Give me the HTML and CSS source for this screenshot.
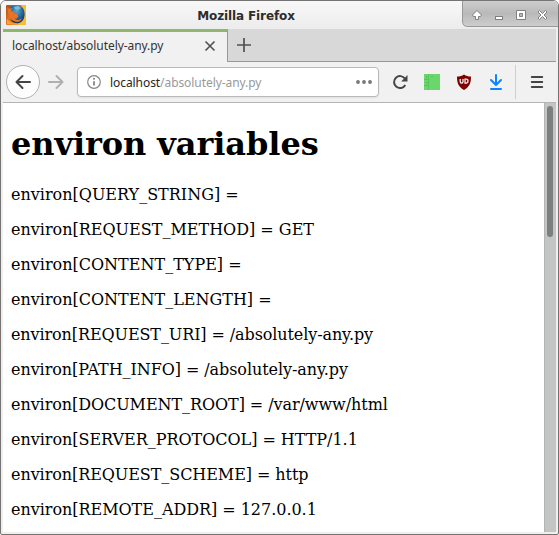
FILE: index.html
```html
<!DOCTYPE html>
<html lang="en">
<head>
<meta charset="utf-8">
<title>Mozilla Firefox</title>
<link rel="stylesheet" href="styles.css">
</head>
<body>
<div class="window">
  <header class="titlebar">
    <svg class="logo" width="20" height="20" viewBox="0 0 20 20">
      <defs>
        <linearGradient id="fox" x1="0" y1="0" x2="1" y2="1"><stop offset="0" stop-color="#ad4b20"/><stop offset=".5" stop-color="#e97820"/><stop offset="1" stop-color="#ffc52f"/></linearGradient>
        <radialGradient id="globe" cx=".45" cy=".3" r=".7"><stop offset="0" stop-color="#5ba9cf"/><stop offset=".6" stop-color="#23649b"/><stop offset="1" stop-color="#123265"/></radialGradient>
      </defs>
      <rect width="20" height="20" rx="1" fill="url(#fox)"/>
      <path d="M15 0h5v20h-8l5-6 1-6z" fill="#f9bd32"/>
      <path d="M4 2C7-.5 14 0 17 3c3 5 2 13-4 15-5 1-9-2-9-6l5 1 3-3-4-2-3-1z" fill="url(#globe)"/>
      <path d="M1 2l2 2 3-1-1 3 4 1-2 2 1 2 4 0c0 3-3 3-4 2 3 3 6 2 8 0-1 4-5 5-8 3-4-1-6-5-6-9z" fill="#e87322"/>
      <path d="M8 2l4-1 3 2-3 2-3-1z" fill="#7cbbd1"/>
      <path d="M1 14l4 4 7 1H1z" fill="#f5a23a"/>
    </svg>
    <h2 class="title">Mozilla Firefox</h2>
    <svg class="controls" width="97" height="26" viewBox="0 0 97 26">
      <defs><linearGradient id="ctl" x1="0" y1="0" x2="0" y2="1"><stop offset="0" stop-color="#cfcfcf"/><stop offset=".5" stop-color="#b9b9b9"/><stop offset="1" stop-color="#cecece"/></linearGradient></defs>
      <path d="M1.500-1V20q0 5.500 5 5.500H98V-1z" fill="url(#ctl)" stroke="#999"/>
      <g transform="translate(1 0)" fill="#fff" stroke="#808080" stroke-width="1">
        <path d="M15 9.500l4.500 4.500-1 1.500h-2v3h-3v-3h-2l-1-1.500z"/>
        <rect x="33.500" y="15.500" width="7" height="3"/>
        <path fill-rule="evenodd" d="M54.500 9.500h9v9h-9zM57.500 12.500v3h3v-3z"/>
        <path d="M76 11l1.500-1.500 3 3 3-3L85 11l-3 3 3 3-1.500 1.500-3-3-3 3L76 17l3-3z"/>
      </g>
    </svg>
  </header>

  <nav class="tabs">
    <div class="tab">
      <span class="tab-label">localhost/absolutely-any.py</span>
      <svg class="close" width="12" height="12" viewBox="0 0 12 12"><path d="M1.500 1.500l9 9m0-9l-9 9" stroke="#505050" stroke-width="1.600"/></svg>
    </div>
    <svg class="new-tab" width="16" height="16" viewBox="0 0 16 16"><path d="M8 1v14M1 8h14" stroke="#505050" stroke-width="1.700"/></svg>
  </nav>

  <div class="toolbar">
    <div class="back"><svg width="18" height="18" viewBox="0 0 18 18"><path d="M16 9H2.500M8.500 3L2.500 9l6 6" fill="none" stroke="#454545" stroke-width="2" stroke-linecap="round" stroke-linejoin="round"/></svg></div>
    <svg class="forward" width="18" height="18" viewBox="0 0 18 18"><path d="M2 9h13.500M9.500 3l6 6-6 6" fill="none" stroke="#b0b0b0" stroke-width="2" stroke-linecap="round" stroke-linejoin="round"/></svg>
    <div class="address">
      <svg width="16" height="16" viewBox="0 0 16 16"><circle cx="8" cy="8" r="6.300" fill="none" stroke="#858585" stroke-width="1.200"/><path d="M8 7.200v4.300" stroke="#858585" stroke-width="1.800"/><circle cx="8" cy="4.800" r="1.050" fill="#858585"/></svg>
      <span class="url"><span class="host">localhost</span>/absolutely-any.py</span>
      <svg width="16" height="4" viewBox="0 0 16 4"><g fill="#777"><circle cx="2" cy="2" r="1.900"/><circle cx="8" cy="2" r="1.900"/><circle cx="14" cy="2" r="1.900"/></g></svg>
    </div>
    <div class="actions">
      <svg width="16" height="16" viewBox="0 0 16 16"><path d="M13 4.700A6 6 0 1 0 13.300 11" fill="none" stroke="#454545" stroke-width="2"/><path d="M15.500 1v6.500H9.200z" fill="#454545"/></svg>
      <svg width="16" height="16" viewBox="0 0 16 16"><path fill="#6bd66b" d="M0 0h16v16H0z"/><path d="M4.500 0v16M0 11.500h4M0 5.500h4" stroke="#4bb856" fill="none" opacity=".65"/><path d="M2 2h1v2H2zm0 6h2v1H2zm5-6h2v1H7z" fill="#55bd5c"/></svg>
      <svg width="16" height="16" viewBox="0 0 16 16"><path d="M8 .5c2 1.500 4 2 7 2 0 6-1 10-7 13.500C2 12.500 1 8.500 1 2.500c3 0 5-.5 7-2z" fill="#800000"/><path d="M4.200 5v2.800q0 1.400 1.400 1.400T7 7.800V5M9 5v4.200h1q2 0 2-2.100t-2-2.100z" fill="none" stroke="#fff" stroke-width="1.200"/></svg>
      <svg width="16" height="16" viewBox="0 0 16 16"><path d="M8 1v9.500M3 6l5 5 5-5M3 15h10" fill="none" stroke="#0a84ff" stroke-width="2" stroke-linecap="round" stroke-linejoin="round"/></svg>
    </div>
    <div class="divider"></div>
    <svg class="menu" width="14" height="14" viewBox="0 0 14 14"><path d="M1.800 2h10.400M1.800 7h10.400M1.800 12h10.400" stroke="#454545" stroke-width="2" stroke-linecap="round"/></svg>
  </div>

  <div class="viewport">
    <main class="page">
      <h1>environ variables</h1>
      <p>environ[QUERY_STRING] =</p>
      <p>environ[REQUEST_METHOD] = GET</p>
      <p>environ[CONTENT_TYPE] =</p>
      <p>environ[CONTENT_LENGTH] =</p>
      <p class="tighter">environ[REQUEST_URI] = /absolutely-any.py</p>
      <p class="tight">environ[PATH_INFO] = /absolutely-any.py</p>
      <p class="tight">environ[DOCUMENT_ROOT] = /var/www/html</p>
      <p class="snug">environ[SERVER_PROTOCOL] = HTTP/1.1</p>
      <p class="tight">environ[REQUEST_SCHEME] = http</p>
      <p class="snug">environ[REMOTE_ADDR] = 127.0.0.1</p>
    </main>
    <div class="scrollbar"><div class="thumb"></div></div>
  </div>
</div>
</body>
</html>
```
FILE: styles.css
```css
* { box-sizing: border-box; }
body { margin: 0; background: #fff; overflow: hidden; }
svg { display: block; flex: none; }

.window {
  width: 559px;
  height: 535px;
  display: flex;
  flex-direction: column;
  border: 1px solid #767373;
  border-radius: 6px 6px 2px 2px;
  padding: 0 2px 2px;
  background: #f0efef;
  overflow: hidden;
}

.titlebar {
  height: 28px;
  flex: none;
  display: grid;
  grid-template-columns: 29px 1fr 97px;
  margin: 0 -2px;
  background: linear-gradient(#f8f8f8, #ececec);
}
.logo { margin: 4px 0 0 5px; }
.title {
  margin: 0;
  padding-left: 1px;
  text-align: center;
  font: bold 12px/30px "DejaVu Sans", sans-serif;
  letter-spacing: -0.12px;
  color: #2d2d2d;
}
.controls { justify-self: end; }

.tabs {
  height: 33px;
  flex: none;
  display: flex;
  background: #d8d8d8;
  border-bottom: 1px solid #979797;
}
.tab {
  width: 225px;
  height: 33px;
  display: flex;
  align-items: center;
  justify-content: space-between;
  padding: 0 11px 0 9px;
  background: #f1f1f1;
  border-top: 3px solid #8fb56e;
  border-right: 1px solid #979797;
}
.tab-label, .url {
  font: 12px/18px "Noto Sans", sans-serif;
  letter-spacing: -0.07px;
  color: #333;
  white-space: nowrap;
}
.tab-label { margin-top: -2px; }
.close { margin-top: -2px; }
.new-tab { margin: 8px 0 0 8px; }

.toolbar {
  height: 41px;
  flex: none;
  display: flex;
  align-items: center;
  padding-left: 3px;
  background: #f1f1f1;
  border-bottom: 1px solid #b5b5b5;
}
.back {
  width: 34px;
  height: 34px;
  display: grid;
  place-items: center;
  border: 1px solid #b1b1b1;
  border-radius: 50%;
  background: #fdfdfd;
}
.forward { margin-left: 7px; }
.address {
  width: 302px;
  height: 30px;
  display: flex;
  align-items: center;
  margin-left: 12px;
  padding: 0 6px 0 8px;
  background: #fff;
  border: 1px solid #b9b9b9;
  border-radius: 4px;
  box-shadow: 0 1px 2px #0001;
}
.url { flex: 1; margin: 2px 0 0 8px; color: #999; }
.host { color: #252525; }
.actions { display: flex; gap: 16px; margin-left: 13px; }
.divider { width: 1px; height: 34px; margin-left: 11px; background: #cfcfcf; }
.menu { margin-left: 14px; }

.viewport { flex: 1; min-height: 0; display: flex; }
.page {
  flex: 1;
  padding: 1px 8px 0;
  overflow: hidden;
  background: #fff;
  color: #000;
  font: 16px/19px "DejaVu Serif", serif;
}
.page h1 { margin: 21px 0 22px; font-size: 32px; line-height: 38px; letter-spacing: -0.08px; }
.page p { margin: 16px 0; }
.page .snug { letter-spacing: -0.03px; }
.page .tight { letter-spacing: -0.07px; }
.page .tighter { letter-spacing: -0.1px; }
.scrollbar {
  width: 12px;
  padding: 3px 3px 0 2px;
  background: #c3c5c4;
  border-left: 1px solid #b3b5b4;
}
.thumb { width: 6px; height: 131px; border-radius: 3px; background: #7b7f7d; }
```
